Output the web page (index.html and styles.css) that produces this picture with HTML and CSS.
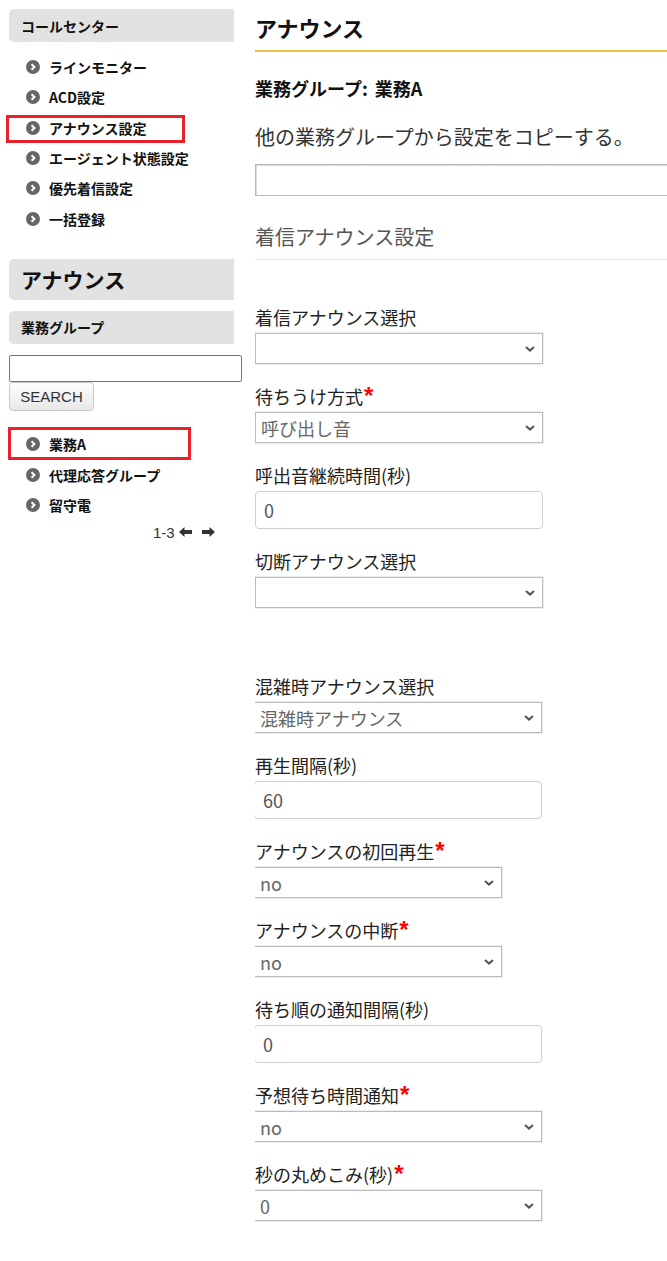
FILE: index.html
```html
<!DOCTYPE html>
<html lang="ja">
<head>
<meta charset="utf-8">
<title>アナウンス</title>
<link rel="stylesheet" href="styles.css">
</head>
<body>
<div class="page">
  <aside class="sidebar">
    <div class="side-box">コールセンター</div>
    <ul class="menu">
      <li><span class="dot"><svg viewBox="0 0 14 14" width="14" height="14"><circle cx="7" cy="7" r="7" fill="#666"/><path d="M5.6 4.2 L8.4 7 L5.6 9.8" fill="none" stroke="#fff" stroke-width="2"/></svg></span>ラインモニター</li>
      <li><span class="dot"><svg viewBox="0 0 14 14" width="14" height="14"><circle cx="7" cy="7" r="7" fill="#666"/><path d="M5.6 4.2 L8.4 7 L5.6 9.8" fill="none" stroke="#fff" stroke-width="2"/></svg></span>ACD設定</li>
      <li><span class="dot"><svg viewBox="0 0 14 14" width="14" height="14"><circle cx="7" cy="7" r="7" fill="#666"/><path d="M5.6 4.2 L8.4 7 L5.6 9.8" fill="none" stroke="#fff" stroke-width="2"/></svg></span>アナウンス設定</li>
      <li><span class="dot"><svg viewBox="0 0 14 14" width="14" height="14"><circle cx="7" cy="7" r="7" fill="#666"/><path d="M5.6 4.2 L8.4 7 L5.6 9.8" fill="none" stroke="#fff" stroke-width="2"/></svg></span>エージェント状態設定</li>
      <li><span class="dot"><svg viewBox="0 0 14 14" width="14" height="14"><circle cx="7" cy="7" r="7" fill="#666"/><path d="M5.6 4.2 L8.4 7 L5.6 9.8" fill="none" stroke="#fff" stroke-width="2"/></svg></span>優先着信設定</li>
      <li><span class="dot"><svg viewBox="0 0 14 14" width="14" height="14"><circle cx="7" cy="7" r="7" fill="#666"/><path d="M5.6 4.2 L8.4 7 L5.6 9.8" fill="none" stroke="#fff" stroke-width="2"/></svg></span>一括登録</li>
    </ul>
    <div class="side-box side-title">アナウンス</div>
    <div class="side-box side-sub">業務グループ</div>
    <input class="search-input" type="text">
    <button class="search-btn" type="button">SEARCH</button>
    <ul class="menu group-list">
      <li><span class="dot"><svg viewBox="0 0 14 14" width="14" height="14"><circle cx="7" cy="7" r="7" fill="#666"/><path d="M5.6 4.2 L8.4 7 L5.6 9.8" fill="none" stroke="#fff" stroke-width="2"/></svg></span>業務A</li>
      <li><span class="dot"><svg viewBox="0 0 14 14" width="14" height="14"><circle cx="7" cy="7" r="7" fill="#666"/><path d="M5.6 4.2 L8.4 7 L5.6 9.8" fill="none" stroke="#fff" stroke-width="2"/></svg></span>代理応答グループ</li>
      <li><span class="dot"><svg viewBox="0 0 14 14" width="14" height="14"><circle cx="7" cy="7" r="7" fill="#666"/><path d="M5.6 4.2 L8.4 7 L5.6 9.8" fill="none" stroke="#fff" stroke-width="2"/></svg></span>留守電</li>
    </ul>
    <div class="pager">
      <span class="pager-count">1-3</span>
      <svg class="arrow arrow-left" viewBox="0 0 13 10" width="13" height="10"><polygon points="0,5 5.5,0 5.5,3 13,3 13,7 5.5,7 5.5,10" fill="#333"/></svg>
      <svg class="arrow" viewBox="0 0 13 10" width="13" height="10"><polygon points="13,5 7.5,0 7.5,3 0,3 0,7 7.5,7 7.5,10" fill="#333"/></svg>
    </div>
    <div class="mark mark-1"></div>
    <div class="mark mark-2"></div>
  </aside>

  <main class="main">
    <h1 class="page-title">アナウンス</h1>
    <div class="group-name">業務グループ: 業務A</div>
    <div class="copy-text">他の業務グループから設定をコピーする。</div>
    <input class="copy-input" type="text">
    <div class="section-title">着信アナウンス設定</div>

    <div class="form">
      <div class="field">
        <div class="label">着信アナウンス選択</div>
        <div class="sel wide"><select><option></option></select><svg class="chev" viewBox="0 0 10 6" width="10" height="6"><path d="M1 1 L5 4.6 L9 1" fill="none" stroke="#555" stroke-width="2"/></svg></div>
      </div>
      <div class="field">
        <div class="label">待ちうけ方式<span class="req">*</span></div>
        <div class="sel wide"><select><option>呼び出し音</option></select><svg class="chev" viewBox="0 0 10 6" width="10" height="6"><path d="M1 1 L5 4.6 L9 1" fill="none" stroke="#555" stroke-width="2"/></svg></div>
      </div>
      <div class="field">
        <div class="label">呼出音継続時間(秒)</div>
        <input class="num wide" type="text" value="0">
      </div>
      <div class="field">
        <div class="label">切断アナウンス選択</div>
        <div class="sel wide"><select><option></option></select><svg class="chev" viewBox="0 0 10 6" width="10" height="6"><path d="M1 1 L5 4.6 L9 1" fill="none" stroke="#555" stroke-width="2"/></svg></div>
      </div>

      <div class="field busy">
        <div class="label">混雑時アナウンス選択</div>
        <div class="sel wide shift"><select><option>混雑時アナウンス</option></select><svg class="chev" viewBox="0 0 10 6" width="10" height="6"><path d="M1 1 L5 4.6 L9 1" fill="none" stroke="#555" stroke-width="2"/></svg></div>
      </div>
      <div class="field">
        <div class="label">再生間隔(秒)</div>
        <input class="num wide shift" type="text" value="60">
      </div>
      <div class="field">
        <div class="label">アナウンスの初回再生<span class="req">*</span></div>
        <div class="sel narrow shift"><select><option>no</option></select><svg class="chev" viewBox="0 0 10 6" width="10" height="6"><path d="M1 1 L5 4.6 L9 1" fill="none" stroke="#555" stroke-width="2"/></svg></div>
      </div>
      <div class="field">
        <div class="label">アナウンスの中断<span class="req">*</span></div>
        <div class="sel narrow shift"><select><option>no</option></select><svg class="chev" viewBox="0 0 10 6" width="10" height="6"><path d="M1 1 L5 4.6 L9 1" fill="none" stroke="#555" stroke-width="2"/></svg></div>
      </div>
      <div class="field">
        <div class="label">待ち順の通知間隔(秒)</div>
        <input class="num wide shift" type="text" value="0">
      </div>
      <div class="field">
        <div class="label">予想待ち時間通知<span class="req">*</span></div>
        <div class="sel wide shift"><select><option>no</option></select><svg class="chev" viewBox="0 0 10 6" width="10" height="6"><path d="M1 1 L5 4.6 L9 1" fill="none" stroke="#555" stroke-width="2"/></svg></div>
      </div>
      <div class="field">
        <div class="label">秒の丸めこみ(秒)<span class="req">*</span></div>
        <div class="sel wide shift"><select><option>0</option></select><svg class="chev" viewBox="0 0 10 6" width="10" height="6"><path d="M1 1 L5 4.6 L9 1" fill="none" stroke="#555" stroke-width="2"/></svg></div>
      </div>
    </div>
  </main>
</div>
</body>
</html>
```

FILE: styles.css
```css
* { box-sizing: border-box; }

html, body {
  margin: 0;
  padding: 0;
  background: #fff;
}

body {
  font-family: "Noto Sans CJK JP", "Noto Sans", sans-serif;
  color: #222;
  overflow: hidden;
}

.page {
  display: flex;
  align-items: flex-start;
}

/* ---------- sidebar ---------- */
.sidebar {
  position: relative;
  width: 242px;
  flex: 0 0 242px;
  padding: 9px 0 0 9px;
}

.side-box {
  width: 225px;
  height: 33px;
  background: #e2e2e2;
  border-radius: 5px 0 0 5px;
  padding-left: 12px;
  display: flex;
  align-items: center;
  font-size: 14px;
  font-weight: 700;
  color: #111;
  line-height: 1;
}

.side-title {
  height: 41px;
  margin-top: 25px;
  font-size: 21px;
}

.side-sub {
  margin-top: 11px;
}

.menu {
  list-style: none;
  margin: 10px 0 0;
  padding: 0 0 0 17px;
}

.menu li {
  display: flex;
  align-items: center;
  height: 30.3px;
  font-size: 14px;
  font-weight: 700;
  color: #111;
}

.dot {
  display: flex;
  width: 14px;
  height: 14px;
  margin-right: 9px;
}

.search-input {
  display: block;
  width: 233px;
  height: 27px;
  margin: 11px 0 0;
  border: 1px solid #767676;
  border-radius: 2px;
  background: #fff;
}

.search-btn {
  display: block;
  width: 85px;
  height: 29px;
  margin: 0;
  padding: 0;
  border: 1px solid #c8c8c8;
  border-radius: 4px;
  background: linear-gradient(#fdfdfd, #e8e8e8);
  font-family: "Liberation Sans", Arial, sans-serif;
  font-size: 15px;
  color: #333;
}

.group-list {
  margin-top: 18px;
}

.group-list li {
  height: 30.5px;
}

.pager {
  display: flex;
  align-items: center;
  height: 20px;
  margin-top: 2px;
  padding-left: 144px;
  font-family: "Liberation Sans", Arial, sans-serif;
  font-size: 15px;
  color: #333;
}

.pager-count {
  margin-right: 4px;
}

.arrow-left {
  margin-right: 10px;
}

.mark {
  position: absolute;
  border: 3px solid #e8212b;
}

.mark-1 {
  left: 6px;
  top: 115px;
  width: 179px;
  height: 28px;
}

.mark-2 {
  left: 8px;
  top: 427px;
  width: 183px;
  height: 33px;
}

/* ---------- main ---------- */
.main {
  flex: 1;
  min-width: 0;
  margin-left: 13px;
  overflow: hidden;
}

.page-title {
  margin: 12px 0 0;
  padding-bottom: 8px;
  border-bottom: 2px solid #f0c24b;
  font-size: 22px;
  line-height: 30px;
  font-weight: 700;
  color: #111;
}

.group-name {
  margin-top: 24px;
  font-size: 18px;
  line-height: 24px;
  font-weight: 700;
  color: #111;
  word-spacing: 3px;
}

.copy-text {
  margin-top: 23px;
  font-size: 20px;
  line-height: 28px;
  color: #333;
}

.copy-input {
  display: block;
  width: 440px;
  height: 32px;
  margin-top: 13px;
  border: 1px solid #b8b8b8;
  box-shadow: inset 1px 1px 0 #d8d8d8;
  background: #fff;
}

.section-title {
  margin-top: 27px;
  padding-bottom: 8px;
  border-bottom: 1px solid #e3e3e3;
  font-size: 20px;
  line-height: 28px;
  color: #555;
}

.form {
  margin-top: 45px;
}

.field {
  margin-bottom: 20px;
}

.field.busy {
  margin-top: 66px;
}

.label {
  font-size: 18px;
  line-height: 24px;
  margin-bottom: 4px;
  color: #222;
}

.req {
  font-family: "Liberation Sans", Arial, sans-serif;
  font-weight: 700;
  font-size: 24px;
  line-height: 10px;
  color: #f00;
  margin-left: 1px;
}

.wide { width: 288px; }
.narrow { width: 248px; }
.shift { margin-left: -1px; }

.sel {
  position: relative;
  height: 31px;
}

.sel select {
  display: block;
  width: 100%;
  height: 31px;
  margin: 0;
  padding: 0 0 0 5px;
  appearance: none;
  -webkit-appearance: none;
  border: 1px solid #bcbcbc;
  border-radius: 0;
  box-shadow: 0 0 0 1px #ececec;
  background: #fff;
  font-family: "Noto Sans CJK JP", "Noto Sans", sans-serif;
  font-size: 18px;
  color: #666;
}

.chev {
  position: absolute;
  right: 8px;
  top: 13px;
}

.num {
  display: block;
  height: 38px;
  margin-top: 0;
  padding: 0 0 0 8px;
  border: 1px solid #cfcfcf;
  border-radius: 4px;
  background: #fff;
  font-family: "Noto Sans CJK JP", "Noto Sans", sans-serif;
  font-size: 18px;
  color: #555;
}
```
